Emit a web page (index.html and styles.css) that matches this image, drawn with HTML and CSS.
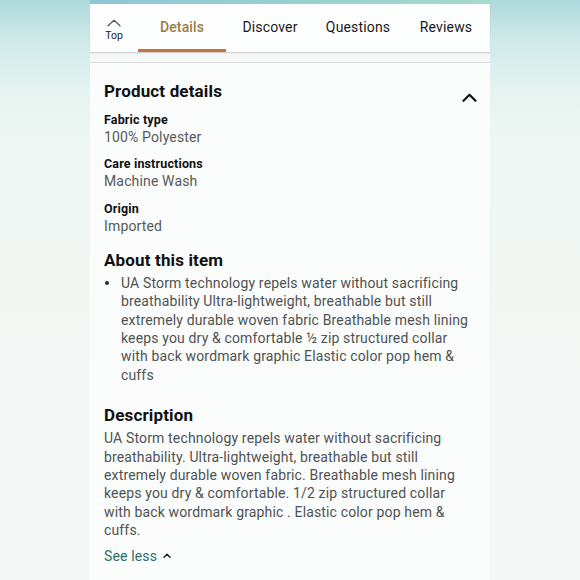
FILE: index.html
```html
<!DOCTYPE html>
<html lang="en">
<head>
<meta charset="utf-8">
<title>Product details</title>
<link rel="stylesheet" href="styles.css">
</head>
<body>
<div class="phone">
  <div class="strip"></div>
  <nav class="tabs">
    <div class="top-tab">
      <svg class="top-chev" width="14" height="8" viewBox="0 0 14 8"><path d="M1 6.8 L7 1.2 L13 6.8" fill="none" stroke="#555" stroke-width="1.3" stroke-linecap="round" stroke-linejoin="round"/></svg>
      <span class="top-label">Top</span>
    </div>
    <div class="tab active">Details</div>
    <div class="tab">Discover</div>
    <div class="tab">Questions</div>
    <div class="tab">Reviews</div>
  </nav>
  <div class="gap"></div>
  <main class="content">
    <div class="head-row">
      <h2 class="heading">Product details</h2>
      <svg class="collapse" width="15" height="9" viewBox="0 0 15 9"><path d="M1.5 7.8 L7.5 1.8 L13.5 7.8" fill="none" stroke="#111" stroke-width="2.2" stroke-linecap="round" stroke-linejoin="round"/></svg>
    </div>
    <dl class="specs">
      <div class="spec"><dt>Fabric type</dt><dd>100% Polyester</dd></div>
      <div class="spec"><dt>Care instructions</dt><dd>Machine Wash</dd></div>
      <div class="spec"><dt>Origin</dt><dd>Imported</dd></div>
    </dl>
    <h2 class="heading about">About this item</h2>
    <ul class="bullets">
      <li><span class="dot"></span><span>UA Storm technology repels water without sacrificing breathability Ultra-lightweight, breathable but still extremely durable woven fabric Breathable mesh lining keeps you dry &amp; comfortable ½ zip structured collar with back wordmark graphic Elastic color pop hem &amp; cuffs</span></li>
    </ul>
    <h2 class="heading desc-head">Description</h2>
    <p class="desc">UA Storm technology repels water without sacrificing breathability. Ultra-lightweight, breathable but still extremely durable woven fabric. Breathable mesh lining keeps you dry &amp; comfortable. 1/2 zip structured collar with back wordmark graphic . Elastic color pop hem &amp; cuffs.</p>
    <div class="see-less">See less <svg class="less-chev" width="8" height="5" viewBox="0 0 8 5"><path d="M1 4.2 L4 1.2 L7 4.2" fill="none" stroke="#222" stroke-width="1.5" stroke-linecap="round" stroke-linejoin="round"/></svg></div>
  </main>
</div>
</body>
</html>
```

FILE: styles.css
```css
html, body {
  margin: 0;
  padding: 0;
}
body {
  width: 580px;
  height: 580px;
  overflow: hidden;
  font-family: Roboto, "Liberation Sans", sans-serif;
  background: linear-gradient(to bottom, #aed9dc 0px, #cfeae8 40px, #e6f3f0 90px, #f1f7f4 150px, #f5f8f6 580px);
}
.phone {
  width: 400px;
  height: 580px;
  margin: 0 auto;
  background: #fbfdfc;
  display: flex;
  flex-direction: column;
}
.strip {
  height: 4px;
  background: linear-gradient(to right, #8fc6d6, #a3dbcc);
}
.tabs {
  height: 48px;
  display: flex;
  background: #fdfefe;
  box-shadow: 0 1px 1px rgba(0, 0, 0, 0.14);
  position: relative;
  z-index: 1;
}
.top-tab {
  width: 48px;
  display: flex;
  flex-direction: column;
  align-items: center;
  padding-top: 15px;
  box-sizing: border-box;
}
.top-chev {
  display: block;
}
.top-label {
  font-size: 10.5px;
  line-height: 12px;
  margin-top: 3px;
  color: #222;
}
.tab {
  flex: 1;
  display: flex;
  align-items: center;
  justify-content: center;
  font-size: 14px;
  line-height: 18px;
  letter-spacing: 0.15px;
  color: #1a1a1a;
  border-bottom: 3px solid transparent;
  box-sizing: border-box;
}
.tab.active {
  color: #9b7b48;
  font-weight: 500;
  border-bottom-color: #c8733e;
}
.gap {
  height: 10px;
  background: #f5f7f6;
  border-bottom: 1px solid #dcdedd;
}
.content {
  padding: 17px 14px 0 14px;
  letter-spacing: 0.15px;
}
.head-row {
  display: flex;
  justify-content: space-between;
  align-items: flex-end;
}
.heading {
  margin: 0;
  font-size: 17px;
  line-height: 22px;
  font-weight: 700;
  color: #0f1111;
}
.collapse {
  display: block;
  margin-bottom: 0;
  margin-right: -1px;
}
.specs {
  margin: 8.5px 0 0 0;
  display: flex;
  flex-direction: column;
  gap: 9.5px;
}
.spec dt {
  font-size: 12.5px;
  line-height: 17px;
  font-weight: 700;
  color: #0f1111;
}
.spec dd {
  margin: 0;
  font-size: 14px;
  line-height: 18.4px;
  color: #565959;
}
.about {
  margin-top: 13px;
}
.bullets {
  list-style: none;
  margin: 3px 0 0 0;
  padding: 0 4px 0 0;
}
.bullets li {
  display: flex;
  font-size: 14px;
  line-height: 18.4px;
  color: #4f5252;
}
.dot {
  flex: 0 0 17px;
  display: flex;
  padding: 7px 0 0 1px;
  box-sizing: border-box;
  align-items: flex-start;
}
.dot::before {
  content: "";
  width: 4px;
  height: 4px;
  border-radius: 50%;
  background: #2a2a2a;
}
.desc-head {
  margin-top: 20px;
}
.desc {
  margin: 3px 0 0 0;
  padding-right: 4px;
  font-size: 14px;
  line-height: 18.4px;
  color: #4f5252;
}
.see-less {
  margin-top: 7.5px;
  font-size: 14px;
  line-height: 18.4px;
  color: #2b6d6a;
  display: flex;
  align-items: center;
  gap: 6px;
}
.less-chev {
  display: block;
  margin-top: -1px;
}
```
